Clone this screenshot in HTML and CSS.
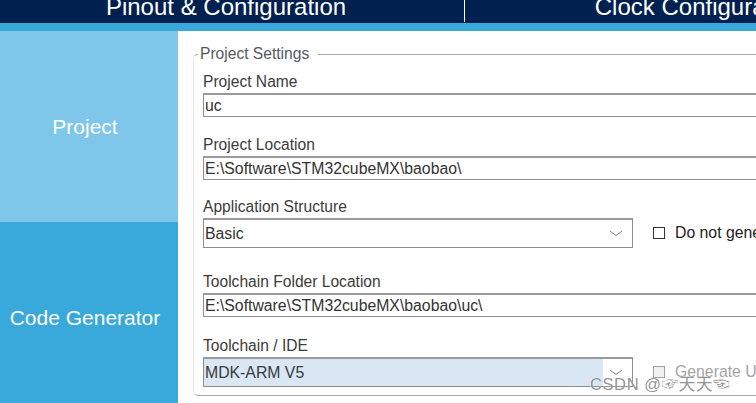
FILE: index.html
```html
<!DOCTYPE html>
<html>
<head>
<meta charset="utf-8">
<link rel="stylesheet" href="styles.css">
</head>
<body>
<div class="app">
  <header class="topbar">
    <div class="tab tab-pinout">Pinout &amp; Configuration</div>
    <div class="tab-sep"></div>
    <div class="tab tab-clock">Clock Configuration</div>
  </header>
  <div class="stripe"></div>
  <div class="main">
    <nav class="side">
      <div class="side-item side-active">Project</div>
      <div class="side-item">Code Generator</div>
    </nav>
    <section class="content">
      <fieldset class="settings">
        <legend class="settings-title">Project Settings</legend>
        <div class="field f1">
          <div class="label">Project Name</div>
          <div class="textbox">uc</div>
        </div>
        <div class="field f2">
          <div class="label">Project Location</div>
          <div class="textbox">E:\Software\STM32cubeMX\baobao\</div>
        </div>
        <div class="field f3">
          <div class="label">Application Structure</div>
          <div class="row">
            <div class="select">
              <div class="select-value">Basic</div>
              <div class="select-arrow"><svg width="14" height="7" viewBox="0 0 14 7"><path d="M1 1 L7 5.5 L13 1" fill="none" stroke="#7a7a7a" stroke-width="1"/></svg></div>
            </div>
            <div class="check"><span class="box"></span><span class="check-text">Do not generate the main()</span></div>
          </div>
        </div>
        <div class="field f4">
          <div class="label">Toolchain Folder Location</div>
          <div class="textbox">E:\Software\STM32cubeMX\baobao\uc\</div>
        </div>
        <div class="field f5">
          <div class="label">Toolchain / IDE</div>
          <div class="row">
            <div class="select">
              <div class="select-value selected">MDK-ARM V5</div>
              <div class="select-arrow"><svg width="14" height="7" viewBox="0 0 14 7"><path d="M1 1 L7 5.5 L13 1" fill="none" stroke="#7a7a7a" stroke-width="1"/></svg></div>
            </div>
            <div class="check disabled"><span class="box"></span><span class="check-text">Generate Under Root</span></div>
          </div>
        </div>
      </fieldset>
    </section>
  </div>
  <div class="watermark">CSDN @☞天天☜</div>
</div>
</body>
</html>
```
FILE: styles.css
```css
* { box-sizing: border-box; }
html, body { margin: 0; padding: 0; }
body {
  width: 756px;
  height: 403px;
  overflow: hidden;
  background: #ffffff;
  font-family: "Liberation Sans", Arial, "Noto Sans CJK SC", sans-serif;
}
.app { position: relative; width: 756px; height: 403px; overflow: hidden; }

.topbar {
  height: 23px;
  background: #00204f;
  display: flex;
  overflow: hidden;
  white-space: nowrap;
}
.tab {
  flex: none;
  color: #ffffff;
  font-size: 24px;
  line-height: 23px;
  margin-top: -5px;
  text-align: center;
}
.tab-pinout { width: 464px; padding-right: 12px; }
.tab-sep { flex: none; width: 1px; height: 22px; background: #ffffff; }
.tab-clock { width: 469px; }

.stripe { height: 8px; background: #39a9dc; }

.main { display: flex; height: 372px; }
.side { width: 178px; flex: none; display: flex; flex-direction: column; }
.side-item {
  height: 191px;
  flex: none;
  display: flex;
  align-items: center;
  justify-content: center;
  padding-right: 8px;
  color: #ffffff;
  font-size: 21px;
  background: #39a9dc;
  white-space: nowrap;
}
.side-active { background: #7ec6ea; }

.content {
  flex: 1;
  overflow: hidden;
  padding: 14px 0 0 15px;
}
.settings {
  width: 720px;
  margin: 0;
  min-width: 0;
  padding: 0 0 8px 9px;
  border: 1px solid #e6e6e6;
  border-top-color: #a3a6aa;
  border-bottom-color: #a8a8a8;
  border-right: none;
  border-radius: 5px 0 0 5px;
}
.settings-title {
  font-size: 15.6px;
  line-height: 18px;
  color: #555a60;
  padding: 0 9px 0 2px;
  margin-left: -5px;
}
.label {
  font-size: 15.6px;
  line-height: 22px;
  height: 22px;
  color: #3c3c3c;
  white-space: nowrap;
}
.f1 { margin-top: 8px; }
.f2 { margin-top: 17px; }
.f3 { margin-top: 16px; }
.f4 { margin-top: 23px; }
.f5 { margin-top: 18px; }

.textbox {
  height: 24px;
  width: 720px;
  border: 1px solid #8e8e8e;
  border-top: 2px solid #9a9a9a;
  border-right: none;
  font-size: 15.8px;
  line-height: 20px;
  padding: 1px 0 0 1px;
  color: #333333;
  white-space: nowrap;
}

.row { display: flex; align-items: center; }
.select {
  width: 430px;
  height: 30px;
  flex: none;
  display: flex;
  border: 1px solid #8e8e8e;
  border-top: 2px solid #9a9a9a;
}
.select-value {
  flex: 1;
  font-size: 15.8px;
  line-height: 27px;
  padding-left: 1px;
  color: #333333;
}
.select-value.selected { background: #d9e7f5; color: #3a3a3a; }
.select-arrow {
  width: 29px;
  flex: none;
  display: flex;
  align-items: center;
  justify-content: center;
  padding-right: 4px;
}
.check {
  display: flex;
  align-items: center;
  margin-left: 20px;
  white-space: nowrap;
  font-size: 15.8px;
  color: #222222;
}
.box {
  width: 12px;
  height: 12px;
  border: 1px solid #333333;
  background: #ffffff;
  flex: none;
  margin-right: 10px;
}
.check.disabled { color: #a4a4a4; }
.check.disabled .box { border-color: #a0a0a0; background: #f0f0f0; }

.watermark {
  position: absolute;
  left: 590px;
  top: 374px;
  font-size: 16.5px;
  line-height: 20px;
  letter-spacing: 0.6px;
  color: rgba(110, 110, 110, 0.75);
  white-space: nowrap;
  text-shadow: 0 0 1px #ffffff;
}
```
